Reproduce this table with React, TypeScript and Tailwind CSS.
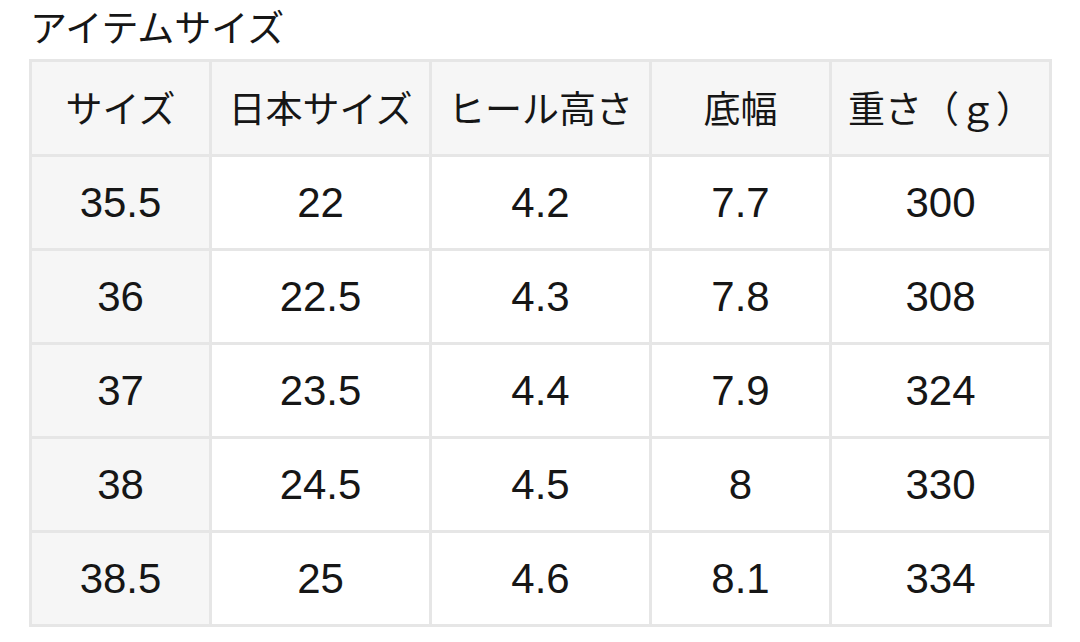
import React from "react";

const headers = ["サイズ", "日本サイズ", "ヒール高さ", "底幅", "重さ（ｇ）"];
const rows = [
  ["35.5", "22", "4.2", "7.7", "300"],
  ["36", "22.5", "4.3", "7.8", "308"],
  ["37", "23.5", "4.4", "7.9", "324"],
  ["38", "24.5", "4.5", "8", "330"],
  ["38.5", "25", "4.6", "8.1", "334"],
];

export default function App() {
  return (
    <div className="w-[1080px] h-[642px] bg-white text-[#161616] overflow-hidden font-['Liberation_Sans','Noto_Sans_CJK_JP',sans-serif]">
      <div className="pl-[30px] pt-[5px] h-[59px] text-[37px] leading-[42px] font-['Noto_Sans_CJK_JP',sans-serif]">
        アイテムサイズ
      </div>
      <div className="ml-[29px] w-[1023px] grid grid-cols-[177px_217px_217px_177px_217px] grid-rows-[92px_91px_91px_91px_91px_91px] gap-[3px] p-[3px] bg-[#e6e6e6]">
        {headers.map((h, i) => (
          <div
            key={i}
            className="bg-[#f6f6f6] flex items-center justify-center text-[37px] font-['Noto_Sans_CJK_JP',sans-serif]"
          >
            {h}
          </div>
        ))}
        {rows.map((r, ri) =>
          r.map((c, ci) => (
            <div
              key={ri + "-" + ci}
              className={
                (ci === 0 ? "bg-[#f6f6f6] " : "bg-white ") +
                "flex items-center justify-center text-[42px] pb-[1px]"
              }
            >
              {c}
            </div>
          ))
        )}
      </div>
    </div>
  );
}
